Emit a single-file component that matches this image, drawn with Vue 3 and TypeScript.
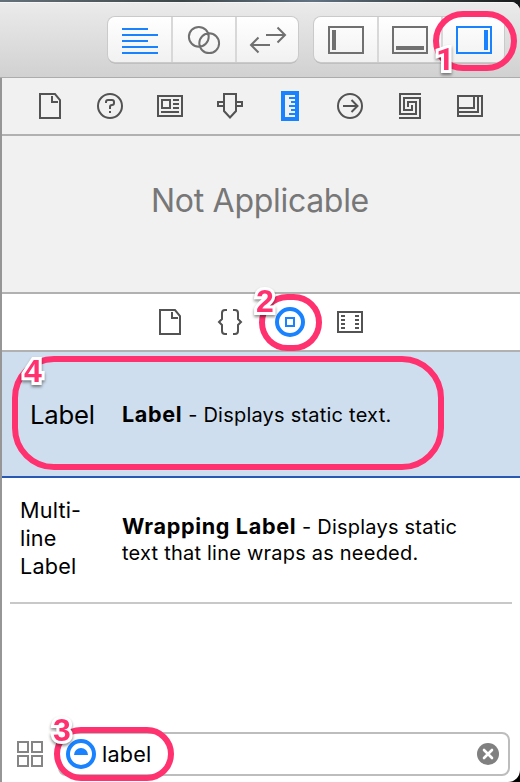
<script setup lang="ts">
interface Shape { d: string; fill?: boolean; w?: number }
interface Icon { name: string; active?: boolean; shapes: Shape[] }
interface Item { preview: string; title: string; text: string; selected: boolean }
interface Mark { n: number; cls: string }

// Every glyph is drawn on a grid centred on 0,0
const frame = 'M-17-13H17V13H-17Z'
const doc = 'M-10-12H5L10-6V12H-10Z M2-10V-4H8'
const ring = (x: number, y: number, r: number): string =>
  `M${x - r} ${y}a${r} ${r} 0 1 0 ${2 * r} 0a${r} ${r} 0 1 0 ${-2 * r} 0Z`

const toolbar: Icon[][] = [
  [
    { name: 'Standard editor', active: true, shapes: [{ d: 'M-18-11H8M-18-5H18M-18 1H8M-18 7H18M-18 13H18' }] },
    { name: 'Assistant editor', shapes: [{ d: ring(-5.2, -3.2, 9.9) + ring(5.2, 3.2, 9.9) }] },
    { name: 'Version editor', shapes: [{ d: 'M-2-5H17M9.5-12.5L17-5L9.5 2.5M2 5H-17M-9.5-2.5L-17 5L-9.5 12.5' }] },
  ],
  [
    { name: 'Navigator', shapes: [{ d: frame }, { d: 'M-14-10H-10V10H-14Z', fill: true }] },
    { name: 'Debug area', shapes: [{ d: frame }, { d: 'M-14 6H14V10H-14Z', fill: true }] },
    { name: 'Utilities', active: true, shapes: [{ d: frame }, { d: 'M10-10H14V10H10Z', fill: true }] },
  ],
]

const inspectors: Icon[] = [
  { name: 'File', shapes: [{ d: doc }] },
  {
    name: 'Help',
    shapes: [{ d: ring(0, 0, 12) }, { d: 'M-4-3V-4Q-4-6-2-6H2Q4-6 4-4V-3Q4-1 2-1Q0-1 0 1V3' }, { d: 'M-1 5H1V7H-1Z', fill: true }],
  },
  { name: 'Identity', shapes: [{ d: 'M-12-10H12V10H-12Z M-8-6H0V2H-8Z M3-6H9M3-2H9M3 2H9M-9 6H9' }] },
  { name: 'Attributes', shapes: [{ d: 'M-6-12H6V5L0 11.5L-6 5Z M-6-4H-12V0H-6 M6-4H12V0H6' }] },
  {
    name: 'Size',
    active: true,
    shapes: [{ d: 'M-9-15H9V15H-9Z M-5-11V11H5V9H-1V7H5V5H1V3H5V1H-1V-1H5V-3H1V-5H5V-7H-1V-9H5V-11Z', fill: true }],
  },
  { name: 'Connections', shapes: [{ d: ring(0, 0, 12) + 'M-7 0H7M1.5-6L7.5 0L1.5 6' }] },
  { name: 'Bindings', shapes: [{ d: 'M11-12H-10V8H6V-4H-2V1 M-11 12H10V-8H-6V4H2V-1' }] },
  { name: 'View effects', shapes: [{ d: 'M-12-10H12V10H-12Z M4-10V2H-12M8-10V6H-12' }] },
]

const libraries: Icon[] = [
  { name: 'File templates', shapes: [{ d: doc }] },
  {
    name: 'Code snippets',
    shapes: [{ d: 'M-3-12H-5Q-8-12-8-9V-3L-11 0L-8 3V9Q-8 12-5 12H-3 M3-12H5Q8-12 8-9V-3L11 0L8 3V9Q8 12 5 12H3' }],
  },
  { name: 'Objects', active: true, shapes: [{ d: ring(0, 0, 13), w: 4 }, { d: 'M-4-4H4V4H-4Z' }] },
  {
    name: 'Media',
    shapes: [{ d: 'M-12-10H12V10H-12Z M-9-6H-5M-9-2H-5M-9 2H-5M-9 6H-5M5-6H9M5-2H9M5 2H9M5 6H9' }],
  },
]

const items: Item[] = [
  { preview: 'Label', title: 'Label', text: 'Displays static text.', selected: true },
  { preview: 'Multi-line Label', title: 'Wrapping Label', text: 'Displays static text that line wraps as needed.', selected: false },
]

const marks: Mark[] = [
  { n: 1, cls: 'one' },
  { n: 2, cls: 'two' },
  { n: 3, cls: 'three' },
  { n: 4, cls: 'four' },
]
</script>

<template>
  <div class="screen">
    <div class="window">
      <header class="toolbar">
        <div v-for="(group, g) in toolbar" :key="g" class="group">
          <div v-for="icon in group" :key="icon.name" class="cell">
            <svg class="icon" :class="{ active: icon.active }" viewBox="-19 -19 38 38">
              <path v-for="(s, i) in icon.shapes" :key="i" :d="s.d" :class="{ solid: s.fill }" />
            </svg>
          </div>
        </div>
      </header>
      <main class="panel">
        <nav class="tabs">
          <svg v-for="icon in inspectors" :key="icon.name" class="icon" :class="{ active: icon.active }" viewBox="-19 -19 38 38">
            <path v-for="(s, i) in icon.shapes" :key="i" :d="s.d" :class="{ solid: s.fill }" />
          </svg>
        </nav>
        <section class="empty">Not Applicable</section>
        <nav class="tabs library">
          <svg v-for="icon in libraries" :key="icon.name" class="icon" :class="{ active: icon.active }" viewBox="-19 -19 38 38">
            <path v-for="(s, i) in icon.shapes" :key="i" :d="s.d" :class="{ solid: s.fill, heavy: s.w }" />
          </svg>
        </nav>
        <article v-for="item in items" :key="item.title" class="item" :class="{ selected: item.selected }">
          <div class="preview">{{ item.preview }}</div>
          <p class="desc"><b>{{ item.title }}</b> - {{ item.text }}</p>
        </article>
        <footer class="filter">
          <svg class="grid" viewBox="0 0 26 26"><path d="M1 1H11V11H1Z M15 1H25V11H15Z M1 15H11V25H1Z M15 15H25V25H15Z" /></svg>
          <div class="field">
            <svg class="scope" viewBox="-15 -15 30 30">
              <circle r="13" /><path d="M-7 1A7 7 0 0 1 7 1Z" />
            </svg>
            <span class="query">label</span>
            <svg class="clear" viewBox="-11 -11 22 22"><circle r="11" /><path d="M-4-4L4 4M4-4L-4 4" /></svg>
          </div>
        </footer>
      </main>
    </div>
    <template v-for="m in marks" :key="m.n">
      <div class="mark" :class="m.cls"></div>
      <div class="num" :class="'num-' + m.cls">{{ m.n }}</div>
    </template>
  </div>
</template>

<style>
body { margin: 0; background: #000; }
</style>

<style scoped>
.screen {
  position: relative; width: 520px; height: 782px; overflow: hidden; box-sizing: border-box; padding-top: 2px;
  background: linear-gradient(90deg, #65717a, #3d4648 35%, #627383 60%, #343b3b 85%, #15191a) 0 0 / 100% 20px no-repeat, #000;
  font-family: Inter, "Liberation Sans", sans-serif; color: #000;
}
.window { height: 780px; border-radius: 0 9px 12px 0; overflow: hidden; background: #fff; }
.toolbar {
  height: 76px; box-sizing: border-box; padding: 15px 15px 0 108px; display: flex; gap: 16px;
  background: linear-gradient(#ebebeb, #d1d1d1); border-bottom: 1px solid #acacac; box-shadow: inset 0 1px #f6f6f6;
}
.group {
  display: flex; width: 190px; height: 45px; border-radius: 7px; overflow: hidden; flex: none;
  background: linear-gradient(#fff, #f1f1f1); box-shadow: 0 0 0 1px #cacaca, 0 1.5px 0 0 #a9a9a9;
}
.cell { width: 64px; box-sizing: border-box; display: flex; align-items: flex-start; padding: 4px 0 0 12px; border-left: 1px solid #d8d8d8; box-shadow: -1px 0 #d8d8d8; flex: none; }
.cell:first-child { border: 0; padding-left: 13px; box-shadow: none; }
.icon { width: 38px; height: 38px; flex: none; fill: none; stroke: #535353; stroke-width: 2; }
.toolbar .icon { stroke: #707070; }
.icon.active, .toolbar .icon.active { stroke: #1982ff; }
.icon .solid { fill: #535353; stroke: none; fill-rule: evenodd; }
.toolbar .icon .solid { fill: #707070; }
.icon.active .solid, .toolbar .icon.active .solid { fill: #1982ff; }
.icon .heavy { stroke-width: 4; }
.panel { border-left: 2px solid #969696; height: 704px; box-sizing: border-box; display: flex; flex-direction: column; }
.tabs {
  height: 58px; box-sizing: border-box; border-bottom: 2px solid #b1b1b1; background: #f1f1f1; flex: none;
  display: flex; gap: 22px; align-items: center; padding-left: 29px;
}
.tabs.library { background: #fff; padding-left: 149px; }
.empty {
  height: 158px; box-sizing: border-box; border-bottom: 2px solid #b1b1b1; background: #f1f1f1; flex: none;
  padding: 45px 2px 0 0; text-align: center; font-size: 32px; line-height: 40px; letter-spacing: -0.3px; color: #777;
}
.item { height: 126px; box-sizing: border-box; border-bottom: 2px solid #c8c8c8; margin: 0 8px; padding-left: 10px; display: flex; align-items: center; flex: none; }
.item.selected { margin: 0; padding: 2px 0 0 28px; background: #cfdeee; border-color: #2759b3; }
.preview { width: 102px; box-sizing: border-box; padding: 0 30px 4px 0; font-size: 21.6px; line-height: 28px; letter-spacing: 0.2px; }
.selected .preview { width: 92px; padding: 0; font-size: 25.7px; letter-spacing: -0.2px; }
.desc { margin: 0; width: 350px; font-size: 20px; line-height: 26px; letter-spacing: 0.22px; }
.desc b { font-size: 21.6px; font-weight: 700; line-height: 20px; letter-spacing: 0.65px; }
.filter { margin-top: auto; padding: 0 10px 6px 15px; display: flex; align-items: center; gap: 15px; }
.grid { width: 26px; height: 26px; fill: none; stroke: #858585; stroke-width: 2; }
.field { flex: 1; height: 44px; box-sizing: border-box; border: 2px solid #bdbdbd; border-radius: 8px; display: flex; align-items: center; padding: 0 9px 0 6px; }
.scope { width: 30px; height: 30px; }
.scope circle { fill: none; stroke: #1982ff; stroke-width: 4; }
.scope path { fill: #1982ff; }
.query { margin-left: 6px; font-size: 21.6px; line-height: 26px; letter-spacing: 0.2px; flex: 1; }
.clear { width: 22px; height: 22px; fill: #808080; }
.clear path { stroke: #fff; stroke-width: 2.6; stroke-linecap: round; }
.mark { position: absolute; box-sizing: border-box; border: 6px solid #ff316f; }
.one { left: 433px; top: 11px; width: 84px; height: 60px; border-radius: 30px; }
.two { left: 259px; top: 294px; width: 63px; height: 57px; border-radius: 29px; }
.three { left: 54px; top: 727px; width: 120px; height: 54px; border-radius: 27px; }
.four { left: 12px; top: 356px; width: 432px; height: 114px; border-radius: 42px; }
.num {
  position: absolute; font: bold 32px/32px "Liberation Sans", sans-serif; color: #ff316f;
  -webkit-text-stroke: 6px #fff; paint-order: stroke fill; filter: drop-shadow(0 2px 1.5px rgba(0, 0, 0, 0.45));
}
.num-one { left: 436px; top: 43px; font-family: Roboto, sans-serif; }
.num-two { left: 256px; top: 285px; }
.num-three { left: 53px; top: 714px; }
.num-four { left: 24px; top: 355px; }
</style>
